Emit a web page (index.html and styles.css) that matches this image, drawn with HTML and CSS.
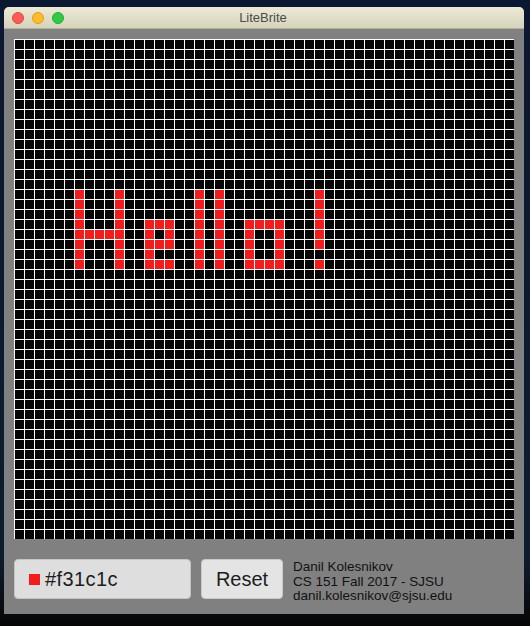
FILE: index.html
```html
<!DOCTYPE html>
<html>
<head>
<meta charset="utf-8">
<title>LiteBrite</title>
<link rel="stylesheet" href="styles.css">
</head>
<body>
<div class="window">
  <div class="titlebar">
    <div class="lights">
      <span class="light red"></span>
      <span class="light yellow"></span>
      <span class="light green"></span>
    </div>
    <div class="title">LiteBrite</div>
  </div>
  <div class="content">
    <div class="board" id="board"></div>
    <div class="controls">
      <div class="field"><span class="swatch"></span><span class="hex">#f31c1c</span></div>
      <button class="reset">Reset</button>
      <div class="credits">
        <div>Danil Kolesnikov</div>
        <div>CS 151 Fall 2017 - SJSU</div>
        <div>danil.kolesnikov@sjsu.edu</div>
      </div>
    </div>
  </div>
</div>
<script src="script.js"></script>
</body>
</html>
```
FILE: styles.css
```css
html, body {
  margin: 0;
  padding: 0;
}
body {
  width: 530px;
  height: 626px;
  overflow: hidden;
  background: linear-gradient(to bottom, #0b1831 0px, #0d1d2e 560px, #080a0c 614px, #050505 626px);
  font-family: "Liberation Sans", Arial, sans-serif;
}
.window {
  width: 520px;
  height: 607px;
  margin: 7px 0 0 4px;
  background: #808080;
  border-radius: 5px 5px 0 0;
  overflow: hidden;
  display: flex;
  flex-direction: column;
}
.titlebar {
  height: 21px;
  flex: none;
  border-bottom: 1px solid #b3b19c;
  background: linear-gradient(to bottom, #ecead6, #d5d3bb);
  display: flex;
  align-items: center;
  justify-content: center;
  position: relative;
}
.lights {
  position: absolute;
  left: 8px;
  top: 5px;
  display: flex;
  gap: 8px;
}
.light {
  width: 12px;
  height: 12px;
  border-radius: 50%;
  box-sizing: border-box;
}
.light.red { background: #fc5b57; border: 1px solid #e2463f; }
.light.yellow { background: #fdbc2e; border: 1px solid #e1a116; }
.light.green { background: #32c84a; border: 1px solid #22ad2e; }
.title {
  font-size: 13px;
  color: #4b4b4b;
  margin-left: -2px;
}
.content {
  padding: 10px 10px 0 10px;
  display: flex;
  flex-direction: column;
}
.board {
  width: 500px;
  height: 500px;
  box-sizing: border-box;
  background: #ffffff;
  padding: 1px 0 0 1px;
  display: grid;
  grid-template-columns: repeat(50, 9px);
  grid-template-rows: repeat(50, 9px);
  gap: 1px;
}
.cell {
  background: #060606;
}
.cell.lit {
  background: #f31c1c;
}
.controls {
  margin-top: 20px;
  display: flex;
  align-items: flex-start;
  height: 40px;
}
.field {
  width: 177px;
  height: 40px;
  box-sizing: border-box;
  background: #dedede;
  border: 1px solid #c4c4c4;
  border-radius: 4px;
  display: flex;
  align-items: center;
  padding-left: 14px;
  gap: 5px;
}
.swatch {
  width: 11px;
  height: 11px;
  background: #f31c1c;
}
.hex {
  font-size: 20px;
  color: #1c1c1c;
  letter-spacing: 0.4px;
}
.reset {
  margin-left: 10px;
  width: 82px;
  height: 40px;
  box-sizing: border-box;
  background: #e4e4e4;
  border: 1px solid #cacaca;
  border-radius: 4px;
  font-family: "Liberation Sans", Arial, sans-serif;
  font-size: 20px;
  color: #1c1c1c;
  padding: 0;
}
.credits {
  margin-left: 10px;
  font-size: 13.5px;
  line-height: 14.5px;
  color: #111111;
  margin-top: 1px;
}
```
FILE: script.js
```js
(function () {
  var board = document.getElementById('board');
  var lit = {};
  function on(c, r) { lit[c + ',' + r] = true; }
  var r, c;
  // H
  for (r = 15; r <= 22; r++) { on(6, r); on(10, r); }
  for (c = 7; c <= 9; c++) on(c, 19);
  // e
  for (c = 13; c <= 15; c++) { on(c, 18); on(c, 20); on(c, 22); }
  on(13, 19); on(15, 19); on(13, 21);
  // l l
  for (r = 15; r <= 22; r++) { on(18, r); on(20, r); }
  // o
  for (c = 23; c <= 26; c++) { on(c, 18); on(c, 22); }
  for (r = 19; r <= 21; r++) { on(23, r); on(26, r); }
  // !
  for (r = 15; r <= 20; r++) on(30, r);
  on(30, 22);
  var frag = document.createDocumentFragment();
  for (r = 0; r < 50; r++) {
    for (c = 0; c < 50; c++) {
      var d = document.createElement('div');
      d.className = lit[c + ',' + r] ? 'cell lit' : 'cell';
      frag.appendChild(d);
    }
  }
  board.appendChild(frag);
})();
```
